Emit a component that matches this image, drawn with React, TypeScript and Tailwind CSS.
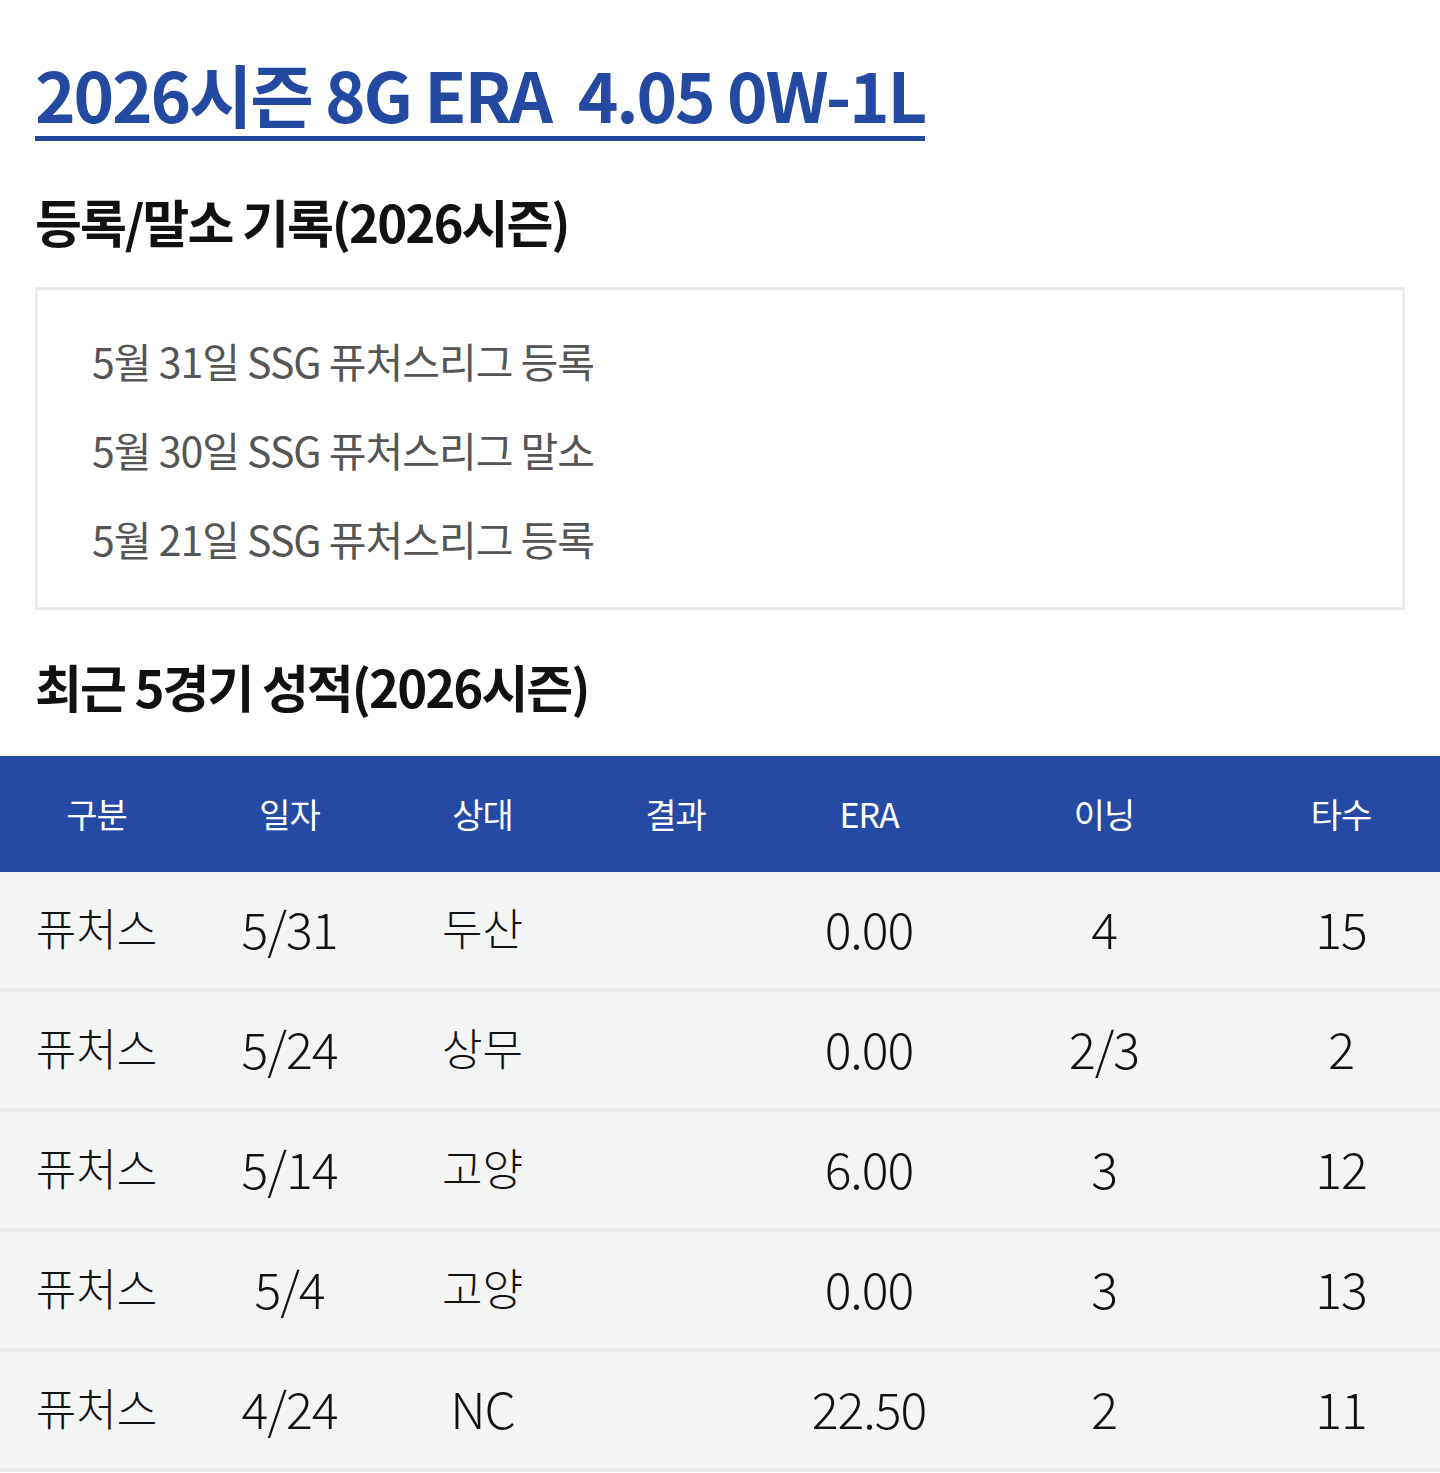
import React from "react";

const rows = [
  ["퓨처스", "5/31", "두산", "", "0.00", "4", "15"],
  ["퓨처스", "5/24", "상무", "", "0.00", "2/3", "2"],
  ["퓨처스", "5/14", "고양", "", "6.00", "3", "12"],
  ["퓨처스", "5/4", "고양", "", "0.00", "3", "13"],
  ["퓨처스", "4/24", "NC", "", "22.50", "2", "11"],
];

const headers = ["구분", "일자", "상대", "결과", "ERA", "이닝", "타수"];

const font = { fontFamily: '"Noto Sans CJK KR", "Noto Sans", sans-serif' };

export default function App() {
  return (
    <div className="w-[1440px] min-h-[1473px] bg-white text-[#111]" style={font}>
      <div className="px-[35px] pt-[52px]">
        <h1 className="inline-block border-b-[5px] border-[#2449a0] pb-[2px] text-[69px] font-bold leading-[82px] tracking-[-2.2px] text-[#2449a0] whitespace-pre">
          {"2026시즌 8G ERA  4.05 0W-1L"}
        </h1>
        <h2 className="mt-[50px] text-[51px] font-bold leading-[60px] tracking-[-2px]">
          등록/말소 기록(2026시즌)
        </h2>
        <div className="mt-[36px] border-[3px] border-[#ebebeb] pl-[54px] pt-[26px] pb-[24px]">
          {["5월 31일 SSG 퓨처스리그 등록", "5월 30일 SSG 퓨처스리그 말소", "5월 21일 SSG 퓨처스리그 등록"].map((t) => (
            <div key={t} className="text-[41px] leading-[89px] tracking-[-1px] text-[#555]">
              {t}
            </div>
          ))}
        </div>
        <h2 className="mt-[46px] text-[51px] font-bold leading-[60px] tracking-[-2px]">
          최근 5경기 성적(2026시즌)
        </h2>
      </div>
      <div className="mt-[40px]">
        <div className="grid h-[116px] grid-cols-[193px_193px_193px_193px_194px_276px_198px] items-center bg-[#244aa4] text-white">
          {headers.map((h) => (
            <div key={h} className="text-center text-[34px] leading-none tracking-[-1px]">
              {h}
            </div>
          ))}
        </div>
        {rows.map((r, i) => (
          <div
            key={i}
            className="grid h-[120px] grid-cols-[193px_193px_193px_193px_194px_276px_198px] items-center border-b-[4px] border-[#e8e9ea] bg-[#f3f4f4] pb-[6px] font-light"
          >
            {r.map((c, j) => (
              <div
                key={j}
                className={
                  /[가-힣]/.test(c)
                    ? "text-center text-[44px] leading-none"
                    : "text-center text-[50px] leading-none tracking-[-1px]"
                }
              >
                {c}
              </div>
            ))}
          </div>
        ))}
      </div>
    </div>
  );
}
